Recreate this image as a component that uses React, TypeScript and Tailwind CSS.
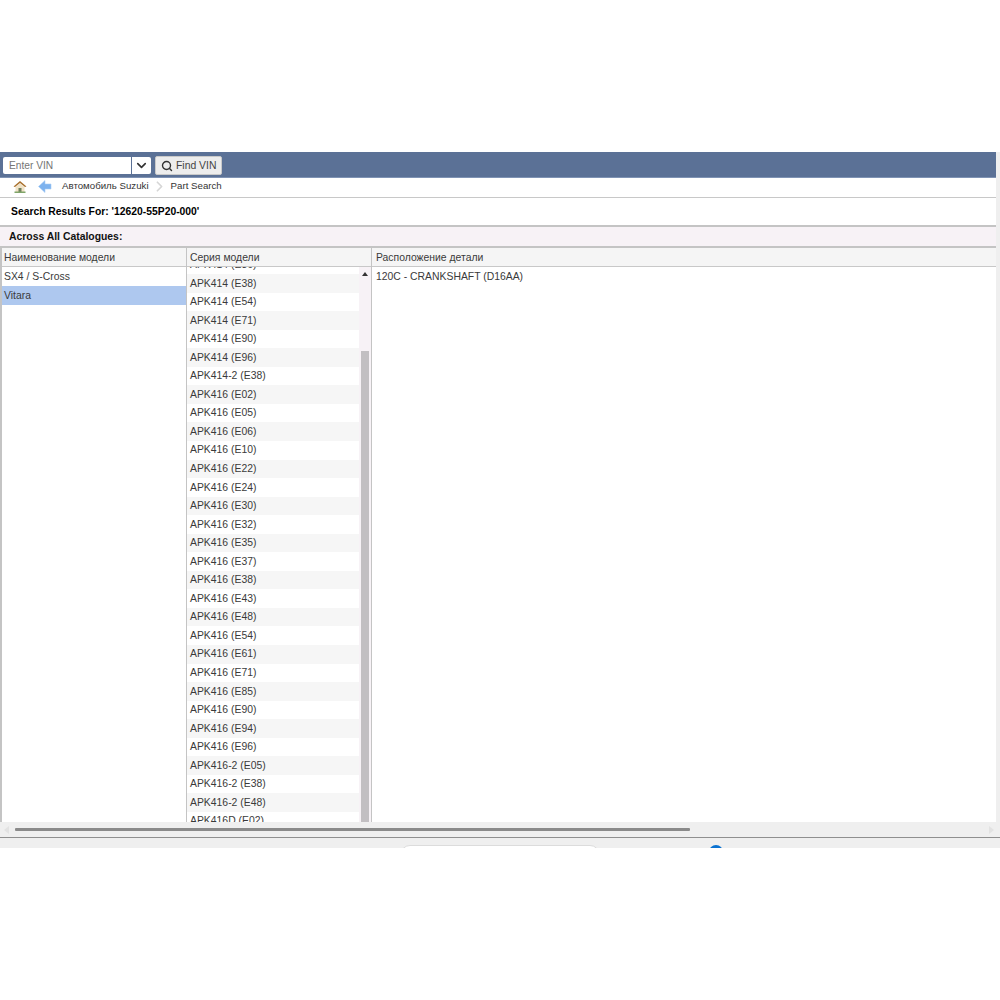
import { ChevronDown, ChevronRight, Search } from "lucide-react"

const series = [
  "APK414 (E36)", "APK414 (E38)", "APK414 (E54)", "APK414 (E71)", "APK414 (E90)", "APK414 (E96)", "APK414-2 (E38)",
  "APK416 (E02)", "APK416 (E05)", "APK416 (E06)", "APK416 (E10)", "APK416 (E22)", "APK416 (E24)", "APK416 (E30)",
  "APK416 (E32)", "APK416 (E35)", "APK416 (E37)", "APK416 (E38)", "APK416 (E43)", "APK416 (E48)", "APK416 (E54)",
  "APK416 (E61)", "APK416 (E71)", "APK416 (E85)", "APK416 (E90)", "APK416 (E94)", "APK416 (E96)", "APK416-2 (E05)",
  "APK416-2 (E38)", "APK416-2 (E48)", "APK416D (E02)",
]

function HomeIcon() {
  return (
    <svg width="14" height="13" viewBox="0 0 14 13">
      <path d="M2.5 7 L7 3.4 L11.5 7 V12 H2.5 Z" fill="#f0e2c6" />
      <path d="M7 1 L13.5 6.5 L12 7 L7 3 L2 7 L.5 6.5 Z" fill="#a9702c" />
      <rect x="5.5" y="8" width="3" height="4" fill="#6e7f5c" />
      <rect x="1.5" y="11.5" width="11" height="1.5" fill="#7fa56a" />
    </svg>
  )
}

function BackIcon() {
  return (
    <svg width="14" height="13" viewBox="0 0 14 13">
      <path d="M7 .5 L.5 6.5 L7 12.5 V9 H13 V4 H7 Z" fill="#7db2ee" stroke="#a8cdf5" strokeWidth=".6" />
    </svg>
  )
}

export default function App() {
  return (
    <div className="h-[1000px] w-[1000px] overflow-hidden bg-white font-['Liberation_Sans',Arial,sans-serif] text-[10.4px] text-[#3a3a3a]">
      <div className="h-[152px]" />
      <div className="flex h-[696px] flex-col bg-[#efefef]">
        <div className="flex h-[670px] w-[996px] flex-col bg-white">
          {/* toolbar */}
          <div className="flex h-[26px] items-center border-b border-b-[#7f93b4] bg-[#5b7196] pl-[3px] pt-[2px]">
            <div className="flex h-[17px] w-[148px] items-center rounded-[2px] bg-white">
              <span className="flex-1 pl-[6px] text-[10.2px] text-[#757575]">Enter VIN</span>
              <div className="flex h-full w-[20px] items-center justify-center border-l border-l-[#5b7196]">
                <ChevronDown size={15} strokeWidth={2.6} color="#333" />
              </div>
            </div>
            <div className="ml-[4px] flex h-[19px] w-[67px] items-center gap-[3px] rounded-[2px] border border-[#c9c9c9] bg-[#ededed] pl-[5px] text-[#444]">
              <Search size={12} strokeWidth={2.8} color="#333" />
              <span>Find VIN</span>
            </div>
          </div>

          {/* breadcrumb */}
          <div className="flex h-[20px] shrink-0 items-center border-b border-b-[#c8c8c8] pb-[2px] pl-[13px] text-[9.7px] text-[#333]">
            <HomeIcon />
            <div className="ml-[11px]">
              <BackIcon />
            </div>
            <span className="ml-[10px]">Автомобиль Suzuki</span>
            <ChevronRight size={17} strokeWidth={2.4} color="#d6d6d6" className="mx-[2px]" />
            <span className="ml-[1px]">Part Search</span>
          </div>

          {/* title */}
          <div className="flex h-[27px] shrink-0 items-center pl-[11px] text-[10.35px] font-bold text-black">
            Search Results For: '12620-55P20-000'
          </div>
          <div className="flex h-[23px] shrink-0 items-center border-y-2 border-y-[#c4c4c4] bg-[#f7f2f6] pl-[9px] font-bold text-[#111]">
            Across All Catalogues:
          </div>

          {/* grid */}
          <div className="flex min-h-0 flex-1">
            <div className="flex w-[187px] shrink-0 flex-col border-r border-l-2 border-x-[#c4c4c4]">
              <div className="flex h-[19px] shrink-0 items-center border-b border-b-[#c8c8c8] bg-[#f5f5f5] pl-[2px] pt-[2px]">Наименование модели</div>
              <div className="flex h-[19px] items-center pl-[2px]">SX4 / S-Cross</div>
              <div className="flex h-[19px] items-center bg-[#aec8ef] pl-[2px]">Vitara</div>
            </div>
            <div className="flex w-[185px] shrink-0 flex-col border-r border-r-[#c4c4c4]">
              <div className="flex h-[19px] shrink-0 items-center border-b border-b-[#c8c8c8] bg-[#f5f5f5] pl-[3px] pt-[2px]">Серия модели</div>
              <div className="flex min-h-0 flex-1">
                <div className="min-w-0 flex-1 overflow-hidden">
                  <div className="mt-[-11.5px]">
                    {series.map((name, i) => (
                      <div key={name} className={`flex h-[18.55px] items-center pl-[3px] ${i % 2 === 1 ? "bg-[#f6f6f6]" : "bg-white"}`}>
                        {name}
                      </div>
                    ))}
                  </div>
                </div>
                <div className="flex w-[12px] shrink-0 flex-col items-center bg-[#f7f2f6]">
                  <div className="mt-[5px] h-0 w-0 border-x-[3px] border-b-[4px] border-x-transparent border-b-[#333]" />
                  <div className="mt-[75px] w-[8px] flex-1 bg-[#c2bfc2]" />
                </div>
              </div>
            </div>
            <div className="flex min-w-0 flex-1 flex-col">
              <div className="flex h-[19px] shrink-0 items-center border-b border-b-[#c8c8c8] bg-[#f5f5f5] pl-[4px] pt-[2px]">Расположение детали</div>
              <div className="flex h-[19px] items-center pl-[4px]">120C - CRANKSHAFT (D16AA)</div>
            </div>
          </div>
        </div>

        {/* horizontal scrollbar */}
        <div className="flex h-[15px] shrink-0 items-center">
          <div className="ml-[4px] h-0 w-0 border-y-[4px] border-r-[5px] border-y-transparent border-r-[#e2e2e2]" />
          <div className="ml-[6px] h-[3px] w-[675px] rounded-[1px] bg-[#8a8a8a]" />
          <div className="ml-auto mr-[6px] h-0 w-0 border-y-[4px] border-l-[5px] border-y-transparent border-l-[#e2e2e2]" />
        </div>
        <div className="h-[1px] shrink-0 bg-[#8f8f8f]" />

        {/* status strip, cut by the bottom edge */}
        <div className="relative flex-1 overflow-hidden">
          <div className="absolute left-[400px] top-[7px] h-[20px] w-[200px] rounded-[10px] border border-[#dcdcdc] bg-white" />
          <div className="absolute left-[709px] top-[7px] h-[14px] w-[14px] rounded-full bg-[#0a72d1]" />
        </div>
      </div>
    </div>
  )
}
